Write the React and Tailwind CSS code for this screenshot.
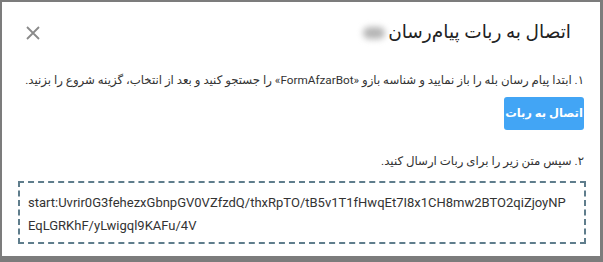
export default function App() {
  return (
    <div className="w-[603px] h-[262px] bg-[#7c7c7c] pt-[2px] pl-[2px] pr-[3px] overflow-hidden">
      <div
        dir="rtl"
        className="h-[254px] bg-white text-[#333]"
        style={{ fontFamily: "Roboto, 'DejaVu Sans', sans-serif" }}
      >
        <div className="flex items-center justify-between pr-[29px] pl-[23px] pt-[16px] h-[46px]">
          <h2 className="text-[18.5px] flex items-center gap-[3px] text-[#222] whitespace-nowrap">
            <span>اتصال به ربات پیام‌رسان</span>
            <span className="inline-block w-[22px] h-[12px] rounded-full bg-[#b5b5b5] blur-[3px]" />
          </h2>
          <button className="text-[#8a8a8a]">
            <svg width="16" height="16" viewBox="0 0 16 16" fill="none" stroke="currentColor" strokeWidth="1.8">
              <path d="M2 2l12 12M14 2L2 14" />
            </svg>
          </button>
        </div>
        <div className="px-[14px] pt-[22px]">
          <p className="text-[11.75px] leading-5 pr-[2px] whitespace-nowrap">
            ۱. ابتدا پیام رسان بله را باز نمایید و شناسه بازو «FormAfzarBot» را جستجو کنید و بعد از انتخاب، گزینه شروع را بزنید.
          </p>
          <button className="mt-[7px] mr-[2px] w-[80px] h-[33px] rounded-[3px] bg-[#42a5f5] text-white text-[11.5px] font-bold whitespace-nowrap">
            اتصال به ربات
          </button>
          <p className="mt-[21px] text-[11.75px] leading-5 pr-[2px] whitespace-nowrap">
            ۲. سپس متن زیر را برای ربات ارسال کنید.
          </p>
          <div
            dir="ltr"
            className="mt-[10px] ml-[2px] border-2 border-dashed border-[#5f7d8c] pl-[8px] pr-[16px] pt-[8px] pb-[5px] text-[13px] leading-[23px] text-[#333] break-all"
          >
            start:Uvrir0G3fehezxGbnpGV0VZfzdQ/thxRpTO/tB5v1T1fHwqEt7I8x1CH8mw2BTO2qiZjoyNPEqLGRKhF/yLwigql9KAFu/4V
          </div>
        </div>
      </div>
    </div>
  );
}
